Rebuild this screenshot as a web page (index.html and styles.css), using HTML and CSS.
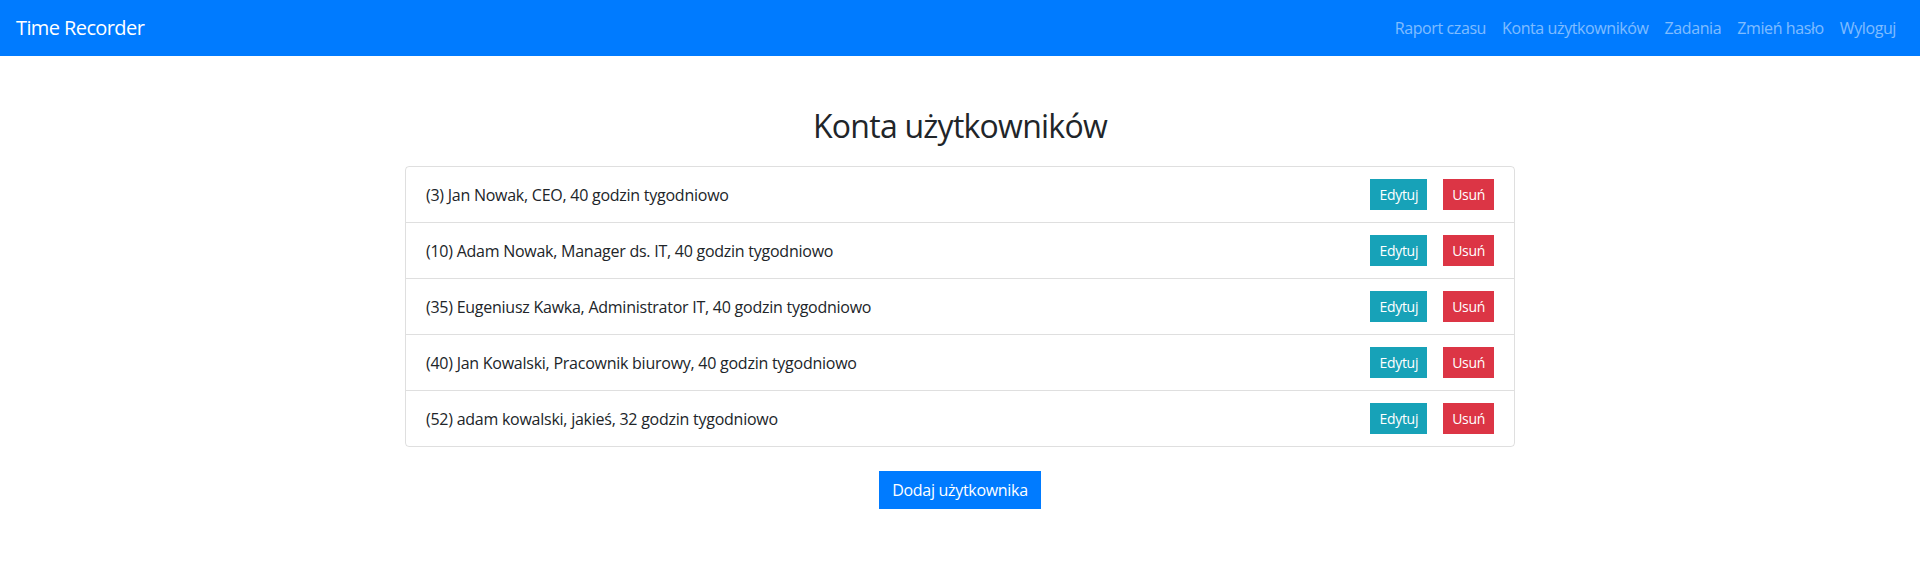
FILE: index.html
```html
<!DOCTYPE html>
<html lang="pl">
<head>
<meta charset="utf-8">
<title>Time Recorder</title>
<link rel="stylesheet" href="styles.css">
</head>
<body>
<nav class="navbar">
  <a class="brand" href="#">Time Recorder</a>
  <ul class="nav-links">
    <li><a href="#">Raport czasu</a></li>
    <li><a href="#">Konta użytkowników</a></li>
    <li><a href="#">Zadania</a></li>
    <li><a href="#">Zmień hasło</a></li>
    <li><a href="#">Wyloguj</a></li>
  </ul>
</nav>
<main class="container">
  <h2 class="title">Konta użytkowników</h2>
  <ul class="list">
    <li class="item"><span>(3) Jan Nowak, CEO, 40 godzin tygodniowo</span><div class="actions"><a class="btn btn-info" href="#">Edytuj</a><a class="btn btn-danger" href="#">Usuń</a></div></li>
    <li class="item"><span>(10) Adam Nowak, Manager ds. IT, 40 godzin tygodniowo</span><div class="actions"><a class="btn btn-info" href="#">Edytuj</a><a class="btn btn-danger" href="#">Usuń</a></div></li>
    <li class="item"><span>(35) Eugeniusz Kawka, Administrator IT, 40 godzin tygodniowo</span><div class="actions"><a class="btn btn-info" href="#">Edytuj</a><a class="btn btn-danger" href="#">Usuń</a></div></li>
    <li class="item"><span>(40) Jan Kowalski, Pracownik biurowy, 40 godzin tygodniowo</span><div class="actions"><a class="btn btn-info" href="#">Edytuj</a><a class="btn btn-danger" href="#">Usuń</a></div></li>
    <li class="item"><span>(52) adam kowalski, jakieś, 32 godzin tygodniowo</span><div class="actions"><a class="btn btn-info" href="#">Edytuj</a><a class="btn btn-danger" href="#">Usuń</a></div></li>
  </ul>
  <div class="add-row"><a class="btn-primary" href="#">Dodaj użytkownika</a></div>
</main>
</body>
</html>
```
FILE: styles.css
```css
* { box-sizing: border-box; }
body {
  margin: 0;
  font-family: "Open Sans", "Noto Sans", sans-serif;
  font-size: 16px;
  line-height: 1.5;
  color: #212529;
  background: #fff;
  letter-spacing: -0.25px;
}
a { text-decoration: none; }
.navbar {
  display: flex;
  align-items: center;
  justify-content: space-between;
  background: #007bff;
  padding: 8px 16px;
  height: 56px;
}
.brand {
  color: #fff;
  font-size: 20px;
  line-height: 30px;
  padding: 5px 0;
  letter-spacing: -0.6px;
}
.nav-links {
  display: flex;
  list-style: none;
  margin: 0;
  padding: 0;
}
.nav-links a {
  display: block;
  padding: 8px;
  color: rgba(255,255,255,.5);
  letter-spacing: -0.4px;
}
.container {
  width: 1140px;
  margin: 0 auto;
  padding: 0 15px;
}
.title {
  text-align: center;
  font-size: 32px;
  font-weight: 400;
  line-height: 1.2;
  margin: 51px 0 21px;
  letter-spacing: -0.75px;
}
.list {
  list-style: none;
  margin: 0;
  padding: 0;
  border: 1px solid rgba(0,0,0,.125);
  border-radius: 4px;
}
.item {
  display: flex;
  align-items: center;
  justify-content: space-between;
  padding: 12px 20px;
  border-top: 1px solid rgba(0,0,0,.125);
}
.item:first-child { border-top: 0; }
.actions {
  display: flex;
  gap: 16px;
}
.btn {
  display: inline-block;
  font-size: 14px;
  line-height: 21px;
  padding: 4px 8px;
  border: 1px solid transparent;
  color: #fff;
  letter-spacing: -0.3px;
}
.btn-info { background: #17a2b8; border-color: #17a2b8; }
.btn-danger { background: #dc3545; border-color: #dc3545; }
.add-row {
  display: flex;
  justify-content: center;
  margin-top: 24px;
}
.btn-primary {
  display: inline-block;
  background: #007bff;
  border: 1px solid #007bff;
  color: #fff;
  padding: 6px 12px;
  line-height: 24px;
  letter-spacing: -0.3px;
}
```
